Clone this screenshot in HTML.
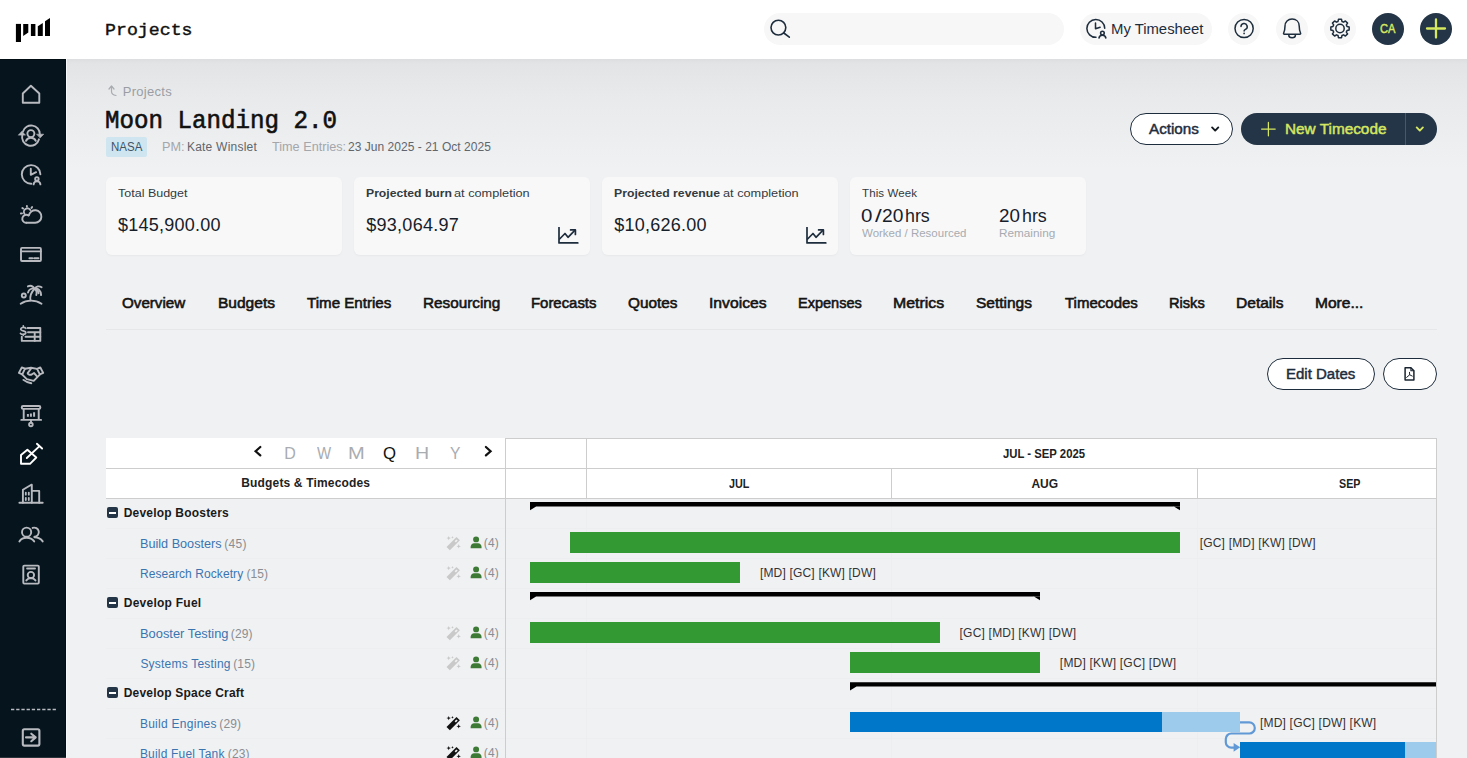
<!DOCTYPE html>
<html><head><meta charset="utf-8">
<style>
*{box-sizing:border-box;margin:0;padding:0}
html,body{width:1467px;height:758px;overflow:hidden}
body{font-family:"Liberation Sans",sans-serif;background:#f0f1f3;color:#1b2733;position:relative}
.abs{position:absolute}
#hdr{position:absolute;left:0;top:0;width:1467px;height:59px;background:#fff;z-index:5}
#side{position:absolute;left:0;top:59px;width:66px;height:699px;background:#06151d;z-index:4;border-top:1px solid #030d14;border-right:1px solid #030d14}
#main{position:absolute;left:66px;top:59px;width:1401px;height:699px;background:linear-gradient(180deg,#dcdee0 0px,#e2e4e6 5px,#e9eaec 40px,#f0f1f3 110px,#f0f1f3 100%)}
.mono{font-family:"Liberation Mono",monospace}
.t{position:absolute;white-space:nowrap;line-height:1}
.pill{position:absolute;border-radius:16px;height:32px}
.circ{position:absolute;width:32px;height:32px;border-radius:50%;top:13px;background:#f7f7f7}
.card{position:absolute;top:177px;width:236px;height:78px;background:#f8f8f8;border-radius:6px;box-shadow:0 1px 2px rgba(0,0,0,.04)}
.tab{position:absolute;top:295px;font-size:15px;font-weight:bold;color:#1a1a1a;white-space:nowrap;line-height:1}
</style></head><body>
<div id="main"></div>
<div id="hdr"></div>
<div id="side"></div><div class="abs" style="left:66px;top:59px;width:1px;height:699px;background:#f7f8f9;z-index:4"></div>

<div class="abs" style="z-index:10;left:0;top:0">
<svg class="abs" style="left:0;top:0" width="66" height="59" viewBox="0 0 66 59"><g fill="#000"><path d="M15.900 23.900h5.100v18.100h-5.100z"/><path d="M23.200 23.900h5.100v8.600l-5.100 3.500z"/><path d="M30.900 23.900h4.500v12.100h-4.500z"/><path d="M37.800 26.200l5-3.200v13h-5z"/><path d="M45 21.300l5-3.200v17.900h-5z"/></g></svg>
<div class="pill" style="left:764px;top:13px;width:300px;background:#f7f7f7"></div>
<svg class="abs" style="left:766px;top:15px" width="26" height="26" viewBox="0 0 26 26" fill="none" stroke="#1e2d3d" stroke-width="1.600" stroke-linecap="round"><circle cx="12.400" cy="12.600" r="7.400"/><path d="M17.800 18l5.500 4.200"/></svg>
<div class="pill" style="left:1080px;top:13px;width:132px;background:#f7f7f7"></div>
<svg class="abs" style="left:1076px;top:8px" width="48" height="48" viewBox="-0.521 -0.833 50 50" fill="none" stroke="#1e2d3d" stroke-width="1.600" stroke-linecap="round" stroke-linejoin="round"><path d="M20.300 29.700A9.300 9.300 0 1 1 29.400 20.300"/><path d="M19.800 14.800v6l4.800-1.600"/><circle cx="27" cy="25.300" r="1.900"/><path d="M23.400 30.400a3.700 3.700 0 0 1 7.200 0"/></svg>
<div class="circ" style="left:1228px"></div>
<svg class="abs" style="left:1224px;top:8px" width="40" height="41" viewBox="0 -0.5 40 41" fill="none" stroke="#1e2d3d" stroke-width="1.500" stroke-linecap="round" stroke-linejoin="round"><circle cx="20.100" cy="20" r="9.100"/><path d="M17 18.100a3.100 3.100 0 1 1 4.500 2.800c-.9.500-1.400.9-1.400 1.700"/><circle cx="20.100" cy="24.900" r=".85" fill="#1e2d3d" stroke="none"/></svg>
<div class="circ" style="left:1276px"></div>
<svg class="abs" style="left:1272px;top:8px" width="40" height="41" viewBox="0 -0.5 40 41" fill="none" stroke="#1e2d3d" stroke-width="1.500" stroke-linecap="round" stroke-linejoin="round"><path d="M12.300 25.700c-.6 0-.9-.5-.7-1 .9-2 1.400-4 1.400-7.200 0-4.200 3-7 7.100-7s7.100 2.800 7.100 7c0 3.200.5 5.200 1.400 7.200.2.500-.1 1-.7 1z"/><path d="M16.800 26.700a3.300 2.500 0 0 0 6.600 0"/></svg>
<div class="circ" style="left:1324px"></div>
<svg class="abs" style="left:1320px;top:8px" width="40" height="41" viewBox="0 -0.5 40 41" fill="none" stroke="#1e2d3d" stroke-width="1.500" stroke-linecap="round" stroke-linejoin="round"><path d="M18.05 12.97 L18.47 10.83 L21.53 10.83 L21.95 12.97 L23.59 13.65 L25.40 12.43 L27.57 14.60 L26.35 16.41 L27.03 18.05 L29.17 18.47 L29.17 21.53 L27.03 21.95 L26.35 23.59 L27.57 25.40 L25.40 27.57 L23.59 26.35 L21.95 27.03 L21.53 29.17 L18.47 29.17 L18.05 27.03 L16.41 26.35 L14.60 27.57 L12.43 25.40 L13.65 23.59 L12.97 21.95 L10.83 21.53 L10.83 18.47 L12.97 18.05 L13.65 16.41 L12.43 14.60 L14.60 12.43 L16.41 13.65z"/><circle cx="20" cy="20" r="4.200"/></svg>
<div class="circ" style="left:1372px;background:#233546"></div>
<div class="circ" style="left:1420px;background:#233546"></div>
<svg class="abs" style="left:1416px;top:8px" width="40" height="41" viewBox="0 -0.5 40 41" fill="none" stroke="#d5e85f" stroke-width="2.300" stroke-linecap="round"><path d="M20 11v18M11 20h18"/></svg>
</div>

<div class="abs" style="z-index:10;left:0;top:0">
<svg class="abs" style="left:11px;top:74px" width="40" height="40" viewBox="0 0 40 40" fill="none" stroke="#b8bac0" stroke-width="1.900" stroke-linecap="round" stroke-linejoin="round"><path d="M19.900 11.800L28.300 19.500V28.800H11.800V19.500z"/></svg>
<svg class="abs" style="left:11px;top:114px" width="40" height="40" viewBox="0 0 40 40" fill="none" stroke="#b8bac0" stroke-width="1.900" stroke-linecap="round" stroke-linejoin="round"><path d="M12 17.500A8.600 8.600 0 0 1 28.800 20"/><path d="M28 25.300A8.600 8.600 0 0 1 11.300 21"/><path d="M25.900 20.200h6.800l-3.400 3.600z" fill="#b8bac0" stroke-width="0.600"/><path d="M7.500 20.900l3.400-3.600 3.400 3.600z" fill="#b8bac0" stroke-width="0.600"/><circle cx="19.900" cy="19.600" r="3.500"/><path d="M15 26.800c.9-2.100 2.800-3.100 4.900-3.100s4 1 4.900 3.100"/></svg>
<svg class="abs" style="left:11px;top:154px" width="40" height="40" viewBox="0 0 40 40" fill="none" stroke="#b8bac0" stroke-width="1.900" stroke-linecap="round" stroke-linejoin="round"><path d="M20.300 29.700A9.300 9.300 0 1 1 29.400 20.300"/><path d="M19.800 14.800v6l5.300-2.600"/><circle cx="25.900" cy="24.900" r="1.750"/><path d="M22.600 30.400a3.400 3.100 0 0 1 6.800 0"/></svg>
<svg class="abs" style="left:11px;top:194px" width="40" height="40" viewBox="0 0 40 40" fill="none" stroke="#b8bac0" stroke-width="1.900" stroke-linecap="round" stroke-linejoin="round"><path d="M15.300 28.800H24.200A6.300 6.300 0 1 0 17.900 21.300"/><path d="M17.400 21.400A4 4 0 1 0 15.300 28.800"/><path d="M13.500 19.900A3.100 3.100 0 0 1 19.300 16"/><path d="M15.900 11.900v.9M21.100 13.100l-.6.800M11.300 14l.8.600M9.900 19.500l1.100-.1"/></svg>
<svg class="abs" style="left:11px;top:234px" width="40" height="40" viewBox="0 0 40 40" fill="none" stroke="#b8bac0" stroke-width="1.900" stroke-linecap="round" stroke-linejoin="round"><rect x="10" y="13.900" width="19.900" height="13.100" rx="1"/><path d="M10 17.400h19.900"/><path d="M18.400 24.300h3M23.200 24.300h4.300"/></svg>
<svg class="abs" style="left:11px;top:274px" width="40" height="40" viewBox="0 0 40 40" fill="none" stroke="#b8bac0" stroke-width="1.900" stroke-linecap="round" stroke-linejoin="round"><path d="M9.700 29.800c6-4.200 14.600-4.200 20.800 0"/><path d="M19.500 26.400c-.8-4 .6-8 3.900-11.400"/><path d="M23.600 14.900c-1.700-3-4.400-3.600-6.700-2.500"/><path d="M23.600 14.900c-3.300-.9-5.800.8-6.600 3.600"/><path d="M23.600 14.900c1.600-2.800 4.600-3.200 7-1.700"/><path d="M23.600 14.900c3.600-.8 6.300 1.600 6.500 6.200"/><path d="M23.600 14.900c2 1.200 2.400 3.600 1.700 6.200"/><path d="M24.500 15.300c2 .6 3 2.200 3 4"/><circle cx="12.800" cy="21.500" r="2"/></svg>
<svg class="abs" style="left:11px;top:314px" width="40" height="40" viewBox="0 0 40 40" fill="none" stroke="#b8bac0" stroke-width="1.900" stroke-linecap="round" stroke-linejoin="round"><path d="M16.600 14H29.300V26.900H10.800V22.700"/><path d="M17 18.200h12.300M14.500 22.700h14.800M23.700 18.200v8.700"/><path d="M14.800 14.400c-.8-1.300-4.900-1.400-5 .7-.1 2.400 5.100 1.100 5 3.600-.1 2.100-4.300 2-5.300.7M12.300 11.900v1.400M12.300 20v1.300" stroke-width="1.700"/></svg>
<svg class="abs" style="left:11px;top:354px" width="40" height="40" viewBox="0 0 40 40" fill="none" stroke="#b8bac0" stroke-width="1.900" stroke-linecap="round" stroke-linejoin="round"><path d="M10.800 13.500l3.200 1.100-2.700 5.800-3.400-1.500z"/><path d="M29.300 13.500l-3.200 1.300 2.700 5.600 3.400-1.500z"/><path d="M14 14.700l6-1 6.100 1.200"/><path d="M20.300 14.300l-3.600 4.800c-.4.600 1.700 2.300 4 1.400l2.300-1.500 3 3.300"/><path d="M11.300 20.600l4.500 4.600 6.900 1.700 6.100-6.300"/><path d="M12.400 25.900c2 1.700 4.700 2.700 7.900 3.400"/></svg>
<svg class="abs" style="left:11px;top:394px" width="40" height="40" viewBox="0 0 40 40" fill="none" stroke="#b8bac0" stroke-width="1.900" stroke-linecap="round" stroke-linejoin="round"><rect x="10.700" y="12" width="18.700" height="2.900" rx="1.400"/><path d="M12.700 15v10.900M27.700 15v10.900M10.300 25.900h19.800M20 25.900v2.700"/><circle cx="19.900" cy="30.500" r="1.800"/><path d="M16.900 20v2.700M19.900 19.400v3.300M23.100 18.300v4.400" stroke-width="2" stroke-linecap="butt"/></svg>
<svg class="abs" style="left:11px;top:434px" width="40" height="40" viewBox="0 0 40 40" fill="none" stroke="#ffffff" stroke-width="1.900" stroke-linecap="round" stroke-linejoin="round"><path d="M25.900 9.800l5.200 4.700M28.500 12.100L15.800 24"/><path d="M16.400 15.800l8.900 7.700-6.300 6.300H10V21.100z"/></svg>
<svg class="abs" style="left:11px;top:474px" width="40" height="40" viewBox="0 0 40 40" fill="none" stroke="#b8bac0" stroke-width="1.900" stroke-linecap="round" stroke-linejoin="round"><path d="M8.400 28.800h23.300"/><path d="M11.900 28.800V15.800L20.300 10.800h.5V28.800"/><path d="M20.800 16.900h7.400V28.800"/><path d="M14.800 18.600v2.100M17.800 18.600v2.100M14.800 23.800v2.200M17.800 23.800v2.200" stroke-width="1.800"/></svg>
<svg class="abs" style="left:11px;top:514px" width="40" height="40" viewBox="0 0 40 40" fill="none" stroke="#b8bac0" stroke-width="1.900" stroke-linecap="round" stroke-linejoin="round"><circle cx="15.600" cy="18.200" r="4.600"/><path d="M8.400 27.400c1.500-2.400 4-3.600 7.200-3.600s5.800 1.200 7.600 3.600"/><path d="M21.600 13.900a4.600 4.600 0 1 1 1.900 8.900"/><path d="M23.500 23.300c3.500 0 6.200 1.300 8.200 4.100"/></svg>
<svg class="abs" style="left:11px;top:554px" width="40" height="40" viewBox="0 0 40 40" fill="none" stroke="#b8bac0" stroke-width="1.900" stroke-linecap="round" stroke-linejoin="round"><rect x="12.300" y="11.600" width="15.500" height="18" rx="1"/><path d="M16.100 14.500h7.900"/><circle cx="19.900" cy="21.100" r="3.200"/><path d="M15.300 26.400c1.200-1.600 2.600-2.400 4.600-2.400s3.400.8 4.600 2.400"/></svg>
<svg class="abs" style="left:11px;top:708px" width="45" height="3"><path d="M0 1.500h45" stroke="#b8bac0" stroke-width="1.400" stroke-dasharray="3.300 1.900"/></svg>
<svg class="abs" style="left:11px;top:718px" width="40" height="40" viewBox="0 0 40 40" fill="none" stroke="#b8bac0" stroke-width="2.100" stroke-linecap="round" stroke-linejoin="round"><rect x="11.800" y="11.200" width="16.600" height="16.400" rx="1.500"/><path d="M15 19.400h9.400M20.300 15.700l4.400 3.700-4.400 3.800"/></svg>
<div class="abs" style="left:0;top:757px;width:66px;height:1px;background:#2b343b"></div>
</div>


<div class="abs" style="z-index:3;left:0;top:0">
<svg class="abs" style="left:107px;top:84px" width="12" height="13" viewBox="0 0 12 13" fill="none" stroke="#a9acb0" stroke-width="1.200" stroke-linecap="round" stroke-linejoin="round"><path d="M2 5l2.500-3 2.500 3"/><path d="M4.500 2.500v5c0 2 1.500 3.500 4.500 4"/></svg>
<div class="abs" style="left:106px;top:137px;width:41px;height:20px;background:#cfe6f0;border-radius:2px"></div>

<div class="pill" style="left:1130px;top:113px;width:103px;background:#fff;border:1px solid #1e2d3d"></div>
<svg class="abs" style="left:1209px;top:124px" width="12" height="12" viewBox="0 0 12 12" fill="none" stroke="#141a20" stroke-width="1.900" stroke-linecap="round" stroke-linejoin="round"><path d="M3.100 3.400l3.100 3.200 3.100-3.200"/></svg>
<div class="pill" style="left:1241px;top:113px;width:196px;background:#233546"></div>
<div class="abs" style="left:1405px;top:113px;width:1px;height:32px;background:#4a5866"></div>
<svg class="abs" style="left:1260px;top:121px" width="17" height="16" viewBox="0 0 17 16" fill="none" stroke="#d5e662" stroke-width="1.250" stroke-linecap="round"><path d="M8.400 1.400v13.400M1.600 8.100h13.600"/></svg>
<svg class="abs" style="left:1414px;top:124px" width="12" height="12" viewBox="0 0 12 12" fill="none" stroke="#d5e662" stroke-width="1.900" stroke-linecap="round" stroke-linejoin="round"><path d="M2.700 3.400l3.100 3.200 3.100-3.200"/></svg>
</div>


<div class="abs" style="z-index:3;left:0;top:0">
<div class="card" style="left:106px"></div>
<div class="card" style="left:354px"></div>
<div class="card" style="left:602px"></div>
<div class="card" style="left:850px"></div>
<svg class="abs" style="left:558px;top:227px" width="22" height="18" viewBox="0 0 22 18" fill="none" stroke="#1e2d3d" stroke-width="1.700" stroke-linecap="round" stroke-linejoin="round"><path d="M1 .4V15.900H19.800"/><path d="M1.600 12L7 6.500l3 3.800 6.800-6.900"/><path d="M12.600 2.900h4.800v4.500"/></svg>
<svg class="abs" style="left:806px;top:227px" width="22" height="18" viewBox="0 0 22 18" fill="none" stroke="#1e2d3d" stroke-width="1.700" stroke-linecap="round" stroke-linejoin="round"><path d="M1 .4V15.900H19.800"/><path d="M1.600 12L7 6.500l3 3.800 6.800-6.900"/><path d="M12.600 2.900h4.800v4.500"/></svg>
</div>

<div class="abs" style="z-index:3;left:0;top:0">
<div class="abs" style="left:106px;top:329px;width:1331px;height:1px;background:#e6e7e9"></div>
<div class="pill" style="left:1267px;top:358px;width:108px;background:#fff;border:1px solid #1e2d3d"></div>
<div class="pill" style="left:1383px;top:358px;width:54px;background:#fff;border:1px solid #1e2d3d"></div>
<svg class="abs" style="left:1403px;top:366px" width="14" height="16" viewBox="0 0 14 16" fill="none" stroke="#1a2430" stroke-width="1.500" stroke-linejoin="round" stroke-linecap="round"><path d="M2.100 1.700h5.800l3 3v9.300h-8.800z"/><path d="M7.900 1.900v2.800h2.800" stroke-width="1.100"/><path d="M6.500 6.300l.2 2.500-3.100 2.600M6.700 8.800l2.600 1.300" stroke-width="1"/></svg>
</div>

<div class="abs" style="z-index:3;left:0;top:0">
<div class="abs" style="left:106px;top:438px;width:1331px;height:61px;background:#fff"></div>
<div class="abs" style="left:505px;top:438px;width:932px;height:1px;background:#cdcdcd"></div>
<div class="abs" style="left:106px;top:468px;width:1331px;height:1px;background:#cdcdcd"></div>
<div class="abs" style="left:106px;top:498px;width:1331px;height:1px;background:#cdcdcd"></div>
<div class="abs" style="left:505px;top:438px;width:1px;height:320px;background:#cdcdcd"></div>
<div class="abs" style="left:1436px;top:438px;width:1px;height:320px;background:#cdcdcd"></div>
<div class="abs" style="left:586px;top:438px;width:1px;height:60px;background:#cdcdcd"></div>
<div class="abs" style="left:891px;top:468px;width:1px;height:30px;background:#cdcdcd"></div>
<div class="abs" style="left:1197px;top:468px;width:1px;height:30px;background:#cdcdcd"></div>
<div class="abs" style="left:586px;top:499px;width:1px;height:259px;background:#edeef0"></div>
<div class="abs" style="left:891px;top:499px;width:1px;height:259px;background:#edeef0"></div>
<div class="abs" style="left:1197px;top:499px;width:1px;height:259px;background:#edeef0"></div>
<div class="abs" style="left:106px;top:528px;width:399px;height:1px;background:#edeef0"></div><div class="abs" style="left:506px;top:528px;width:930px;height:1px;background:#edeef0"></div>
<div class="abs" style="left:106px;top:558px;width:399px;height:1px;background:#edeef0"></div><div class="abs" style="left:506px;top:558px;width:930px;height:1px;background:#edeef0"></div>
<div class="abs" style="left:106px;top:588px;width:399px;height:1px;background:#edeef0"></div><div class="abs" style="left:506px;top:588px;width:930px;height:1px;background:#edeef0"></div>
<div class="abs" style="left:106px;top:618px;width:399px;height:1px;background:#edeef0"></div><div class="abs" style="left:506px;top:618px;width:930px;height:1px;background:#edeef0"></div>
<div class="abs" style="left:106px;top:648px;width:399px;height:1px;background:#edeef0"></div><div class="abs" style="left:506px;top:648px;width:930px;height:1px;background:#edeef0"></div>
<div class="abs" style="left:106px;top:678px;width:399px;height:1px;background:#edeef0"></div><div class="abs" style="left:506px;top:678px;width:930px;height:1px;background:#edeef0"></div>
<div class="abs" style="left:106px;top:708px;width:399px;height:1px;background:#edeef0"></div><div class="abs" style="left:506px;top:708px;width:930px;height:1px;background:#edeef0"></div>
<div class="abs" style="left:106px;top:738px;width:399px;height:1px;background:#edeef0"></div><div class="abs" style="left:506px;top:738px;width:930px;height:1px;background:#edeef0"></div>
<svg class="abs" style="left:252px;top:445px" width="12" height="12" viewBox="0 0 12 12" fill="none" stroke="#111" stroke-width="2.200" stroke-linecap="round" stroke-linejoin="miter"><path d="M8.300 2L3.600 6.200l4.700 4.200"/></svg><svg class="abs" style="left:482px;top:445px" width="12" height="12" viewBox="0 0 12 12" fill="none" stroke="#111" stroke-width="2.200" stroke-linecap="round" stroke-linejoin="miter"><path d="M3.900 2L8.600 6.200l-4.700 4.200"/></svg>
<div class="abs" style="left:107px;top:507px;width:11px;height:11px;background:#233546;border-radius:2px"></div><div class="abs" style="left:109px;top:512px;width:7px;height:1.700px;background:#fff"></div>
<svg class="abs" style="left:446px;top:535px" width="17" height="17" viewBox="0 0 17 17"><g transform="translate(-0.3,0.9)"><g fill="#c9c9c9"><path d="M10.800 1.200l3.400 3.200L4.200 14.300 0.800 11.100z"/><path d="M3 0l.6 1.600L5.200 2.200 3.600 2.800 3 4.400 2.400 2.800.8 2.200l1.600-.6z"/><path d="M6.800 0l.4 1 1 .4-1 .4-.4 1-.4-1-1-.4 1-.4z"/><path d="M13 8.200l.6 1.600 1.600.6-1.600.6-.6 1.600-.6-1.600-1.600-.6 1.600-.6z"/></g><path d="M10.700 3.500l1.300 1.200-1.800 1.800-1.300-1.200z" fill="#f0f1f3"/></g></svg><svg class="abs" style="left:470px;top:536px" width="14" height="14" viewBox="0 0 14 14" fill="#3c7a36"><g transform="translate(0.15,0.27) scale(0.99,0.955)"><circle cx="6" cy="3.300" r="3"/><path d="M0.500 12.500v-1.500c0-2.300 1.700-3.800 3.500-3.800h4c1.800 0 3.500 1.500 3.500 3.800v1.500z"/></g></svg><svg class="abs" style="left:446px;top:565px" width="17" height="17" viewBox="0 0 17 17"><g transform="translate(-0.3,0.9)"><g fill="#c9c9c9"><path d="M10.800 1.200l3.400 3.200L4.200 14.300 0.800 11.100z"/><path d="M3 0l.6 1.600L5.200 2.200 3.600 2.800 3 4.400 2.400 2.800.8 2.200l1.600-.6z"/><path d="M6.800 0l.4 1 1 .4-1 .4-.4 1-.4-1-1-.4 1-.4z"/><path d="M13 8.200l.6 1.600 1.600.6-1.600.6-.6 1.600-.6-1.600-1.600-.6 1.600-.6z"/></g><path d="M10.700 3.500l1.300 1.200-1.800 1.800-1.300-1.200z" fill="#f0f1f3"/></g></svg><svg class="abs" style="left:470px;top:566px" width="14" height="14" viewBox="0 0 14 14" fill="#3c7a36"><g transform="translate(0.15,0.27) scale(0.99,0.955)"><circle cx="6" cy="3.300" r="3"/><path d="M0.500 12.500v-1.500c0-2.300 1.700-3.800 3.500-3.800h4c1.800 0 3.500 1.500 3.500 3.800v1.500z"/></g></svg><div class="abs" style="left:107px;top:597px;width:11px;height:11px;background:#233546;border-radius:2px"></div><div class="abs" style="left:109px;top:602px;width:7px;height:1.700px;background:#fff"></div>
<svg class="abs" style="left:446px;top:625px" width="17" height="17" viewBox="0 0 17 17"><g transform="translate(-0.3,0.9)"><g fill="#c9c9c9"><path d="M10.800 1.200l3.400 3.200L4.200 14.300 0.800 11.100z"/><path d="M3 0l.6 1.600L5.200 2.200 3.600 2.800 3 4.400 2.400 2.800.8 2.200l1.600-.6z"/><path d="M6.800 0l.4 1 1 .4-1 .4-.4 1-.4-1-1-.4 1-.4z"/><path d="M13 8.200l.6 1.600 1.600.6-1.600.6-.6 1.600-.6-1.600-1.600-.6 1.600-.6z"/></g><path d="M10.700 3.500l1.300 1.200-1.800 1.800-1.300-1.200z" fill="#f0f1f3"/></g></svg><svg class="abs" style="left:470px;top:626px" width="14" height="14" viewBox="0 0 14 14" fill="#3c7a36"><g transform="translate(0.15,0.27) scale(0.99,0.955)"><circle cx="6" cy="3.300" r="3"/><path d="M0.500 12.500v-1.500c0-2.300 1.700-3.800 3.500-3.800h4c1.800 0 3.500 1.500 3.500 3.800v1.500z"/></g></svg><svg class="abs" style="left:446px;top:655px" width="17" height="17" viewBox="0 0 17 17"><g transform="translate(-0.3,0.9)"><g fill="#c9c9c9"><path d="M10.800 1.200l3.400 3.200L4.200 14.300 0.800 11.100z"/><path d="M3 0l.6 1.600L5.200 2.200 3.600 2.800 3 4.400 2.400 2.800.8 2.200l1.600-.6z"/><path d="M6.800 0l.4 1 1 .4-1 .4-.4 1-.4-1-1-.4 1-.4z"/><path d="M13 8.200l.6 1.600 1.600.6-1.600.6-.6 1.600-.6-1.600-1.600-.6 1.600-.6z"/></g><path d="M10.700 3.500l1.300 1.200-1.800 1.800-1.300-1.200z" fill="#f0f1f3"/></g></svg><svg class="abs" style="left:470px;top:656px" width="14" height="14" viewBox="0 0 14 14" fill="#3c7a36"><g transform="translate(0.15,0.27) scale(0.99,0.955)"><circle cx="6" cy="3.300" r="3"/><path d="M0.500 12.500v-1.500c0-2.300 1.700-3.800 3.500-3.800h4c1.800 0 3.500 1.500 3.500 3.800v1.500z"/></g></svg><div class="abs" style="left:107px;top:687px;width:11px;height:11px;background:#233546;border-radius:2px"></div><div class="abs" style="left:109px;top:692px;width:7px;height:1.700px;background:#fff"></div>
<svg class="abs" style="left:446px;top:715px" width="17" height="17" viewBox="0 0 17 17"><g transform="translate(-0.3,0.9)"><g fill="#111"><path d="M10.800 1.200l3.400 3.200L4.200 14.300 0.800 11.100z"/><path d="M3 0l.6 1.600L5.200 2.200 3.600 2.800 3 4.400 2.400 2.800.8 2.200l1.600-.6z"/><path d="M6.800 0l.4 1 1 .4-1 .4-.4 1-.4-1-1-.4 1-.4z"/><path d="M13 8.200l.6 1.600 1.600.6-1.600.6-.6 1.600-.6-1.600-1.600-.6 1.600-.6z"/></g><path d="M10.700 3.500l1.300 1.200-1.800 1.800-1.300-1.200z" fill="#f0f1f3"/></g></svg><svg class="abs" style="left:470px;top:716px" width="14" height="14" viewBox="0 0 14 14" fill="#3c7a36"><g transform="translate(0.15,0.27) scale(0.99,0.955)"><circle cx="6" cy="3.300" r="3"/><path d="M0.500 12.500v-1.500c0-2.300 1.700-3.800 3.500-3.800h4c1.800 0 3.500 1.500 3.500 3.800v1.500z"/></g></svg><svg class="abs" style="left:446px;top:745px" width="17" height="17" viewBox="0 0 17 17"><g transform="translate(-0.3,0.9)"><g fill="#111"><path d="M10.800 1.200l3.400 3.200L4.200 14.300 0.800 11.100z"/><path d="M3 0l.6 1.600L5.200 2.200 3.600 2.800 3 4.400 2.400 2.800.8 2.200l1.600-.6z"/><path d="M6.800 0l.4 1 1 .4-1 .4-.4 1-.4-1-1-.4 1-.4z"/><path d="M13 8.200l.6 1.600 1.600.6-1.600.6-.6 1.600-.6-1.600-1.600-.6 1.600-.6z"/></g><path d="M10.700 3.500l1.300 1.200-1.800 1.800-1.300-1.200z" fill="#f0f1f3"/></g></svg><svg class="abs" style="left:470px;top:746px" width="14" height="14" viewBox="0 0 14 14" fill="#3c7a36"><g transform="translate(0.15,0.27) scale(0.99,0.955)"><circle cx="6" cy="3.300" r="3"/><path d="M0.500 12.500v-1.500c0-2.300 1.700-3.800 3.500-3.800h4c1.800 0 3.500 1.500 3.500 3.800v1.500z"/></g></svg>
<svg class="abs" style="left:530px;top:502px" width="650" height="9" viewBox="0 0 650 9"><path d="M0 0H650V4.400H0z M0 4.300h6.500L0 8.300z M650 4.300h-6.500L650 8.300z" fill="#000"/></svg>
<svg class="abs" style="left:530px;top:592px" width="510" height="9" viewBox="0 0 510 9"><path d="M0 0H510V4.400H0z M0 4.300h6.500L0 8.300z M510 4.300h-6.500L510 8.300z" fill="#000"/></svg>
<svg class="abs" style="left:850px;top:682px" width="586" height="10" viewBox="0 -0.2 586 10"><path d="M0 0H586V4.400H0z M0 4.300h6.500L0 8.300z" fill="#000"/></svg>
<div class="abs" style="left:570px;top:532px;width:610px;height:20.600px;background:#339933"></div>
<div class="abs" style="left:530px;top:562px;width:210px;height:20.600px;background:#339933"></div>

<div class="abs" style="left:530px;top:622px;width:410px;height:20.600px;background:#339933"></div>
<div class="abs" style="left:850px;top:652px;width:190px;height:20.600px;background:#339933"></div>

<div class="abs" style="left:850px;top:712px;width:311.800px;height:20.400px;background:#0077c8"></div>
<div class="abs" style="left:1161.800px;top:712px;width:78.200px;height:20.400px;background:#9ccbec"></div>
<div class="abs" style="left:1240px;top:742.200px;width:164.600px;height:20.400px;background:#0077c8"></div>
<div class="abs" style="left:1404.600px;top:742.200px;width:31.400px;height:20.400px;background:#9ccbec"></div>
<svg class="abs" style="left:1215px;top:712px" width="50" height="46" viewBox="1215 712 50 46" fill="none" stroke="#6199d6" stroke-width="2.200"><path d="M1240 722.400H1249.300a5.500 5.500 0 0 1 5.500 5.500v.1a5.500 5.500 0 0 1-5.500 5.500H1231.300a5.500 5.500 0 0 0-5.500 5.500v3.200a5.500 5.500 0 0 0 5.500 5.500H1235"/><path d="M1233.600 742.900l6.600 4.400-6.600 4.500z" fill="#6199d6" stroke="none"/></svg>
</div>

<div class="abs" style="z-index:20;left:0;top:0">
<div class="t" style="left:104.96px;top:22px;font-size:17px;color:#111;font-family:'Liberation Mono',monospace;transform:scaleX(1.0726);transform-origin:0 0;-webkit-text-stroke:0.4px #111">Projects</div>
<div class="t" style="left:1111.47px;top:22px;font-size:14px;color:#1e2d3d;font-family:'Liberation Sans',sans-serif;transform:scaleX(1.0612);transform-origin:0 0">My Timesheet</div>
<div class="t" style="left:1380.46px;top:23px;font-size:12.5px;color:#d5e662;font-family:'Liberation Sans',sans-serif;transform:scaleX(0.8882);transform-origin:0 0;-webkit-text-stroke:0.45px #d5e662">CA</div>
<div class="t" style="left:122.70px;top:85px;font-size:13px;color:#9a9ea4;font-family:'Liberation Sans',sans-serif;letter-spacing:0.286px">Projects</div>
<div class="t" style="left:105.19px;top:109px;font-size:25px;color:#111;font-family:'Liberation Mono',monospace;transform:scaleX(0.9667);transform-origin:0 0;-webkit-text-stroke:0.6px #111">Moon Landing 2.0</div>
<div class="t" style="left:110.74px;top:141px;font-size:12px;color:#3d5468;font-family:'Liberation Sans',sans-serif;transform:scaleX(0.9575);transform-origin:0 0">NASA</div>
<div class="t" style="left:161.55px;top:141px;font-size:12px;color:#a3a6aa;font-family:'Liberation Sans',sans-serif;transform:scaleX(1.0545);transform-origin:0 0">PM:</div>
<div class="t" style="left:186.90px;top:141px;font-size:12px;color:#60666c;font-family:'Liberation Sans',sans-serif;letter-spacing:0.232px">Kate Winslet</div>
<div class="t" style="left:272.14px;top:141px;font-size:12px;color:#a3a6aa;font-family:'Liberation Sans',sans-serif;transform:scaleX(1.0551);transform-origin:0 0">Time Entries:</div>
<div class="t" style="left:348.00px;top:141px;font-size:12px;color:#60666c;font-family:'Liberation Sans',sans-serif;letter-spacing:0.031px">23 Jun 2025 - 21 Oct 2025</div>
<div class="t" style="left:1149.47px;top:122px;font-size:14px;color:#1e2d3d;font-family:'Liberation Sans',sans-serif;transform:scaleX(1.0870);transform-origin:0 0;-webkit-text-stroke:0.45px #1e2d3d">Actions</div>
<div class="t" style="left:1284.90px;top:122px;font-size:14px;color:#d5e662;font-family:'Liberation Sans',sans-serif;transform:scaleX(1.0959);transform-origin:0 0;-webkit-text-stroke:0.45px #d5e662">New Timecode</div>
<div class="t" style="left:117.73px;top:188px;font-size:11.5px;color:#333a40;font-family:'Liberation Sans',sans-serif;transform:scaleX(1.0871);transform-origin:0 0">Total Budget</div>
<div class="t" style="left:118.05px;top:216px;font-size:18px;color:#16202a;font-family:'Liberation Sans',sans-serif;letter-spacing:0.245px">$145,900.00</div>
<div class="t" style="left:365.71px;top:188px;font-size:11.5px;color:#333a40;font-family:'Liberation Sans',sans-serif;transform:scaleX(1.0596);transform-origin:0 0;font-weight:700">Projected burn</div>
<div class="t" style="left:454.45px;top:188px;font-size:11.5px;color:#333a40;font-family:'Liberation Sans',sans-serif;transform:scaleX(1.1063);transform-origin:0 0">at completion</div>
<div class="t" style="left:366.25px;top:216px;font-size:18px;color:#16202a;font-family:'Liberation Sans',sans-serif;letter-spacing:0.267px">$93,064.97</div>
<div class="t" style="left:613.50px;top:188px;font-size:11.5px;color:#333a40;font-family:'Liberation Sans',sans-serif;transform:scaleX(1.0629);transform-origin:0 0;font-weight:700">Projected revenue</div>
<div class="t" style="left:722.65px;top:188px;font-size:11.5px;color:#333a40;font-family:'Liberation Sans',sans-serif;transform:scaleX(1.1063);transform-origin:0 0">at completion</div>
<div class="t" style="left:614.25px;top:216px;font-size:18px;color:#16202a;font-family:'Liberation Sans',sans-serif;letter-spacing:0.228px">$10,626.00</div>
<div class="t" style="left:862.05px;top:188px;font-size:11.5px;color:#333a40;font-family:'Liberation Sans',sans-serif;letter-spacing:0.094px">This Week</div>
<div class="t" style="left:861.37px;top:207px;font-size:18.5px;color:#16202a;font-family:'Liberation Sans',sans-serif;transform:scaleX(1.1086);transform-origin:0 0">0</div>
<div class="t" style="left:875.00px;top:207px;font-size:18.5px;color:#16202a;font-family:'Liberation Sans',sans-serif;transform:scaleX(1.3000);transform-origin:0 0">/</div>
<div class="t" style="left:882.26px;top:207px;font-size:18.5px;color:#16202a;font-family:'Liberation Sans',sans-serif;transform:scaleX(1.0368);transform-origin:0 0">20</div>
<div class="t" style="left:905.29px;top:207px;font-size:18.5px;color:#16202a;font-family:'Liberation Sans',sans-serif;transform:scaleX(0.9642);transform-origin:0 0">hrs</div>
<div class="t" style="left:862.30px;top:228px;font-size:10.5px;color:#a6abb1;font-family:'Liberation Sans',sans-serif;transform:scaleX(1.0937);transform-origin:0 0">Worked / Resourced</div>
<div class="t" style="left:999.28px;top:207px;font-size:18.5px;color:#16202a;font-family:'Liberation Sans',sans-serif;transform:scaleX(1.0158);transform-origin:0 0">20</div>
<div class="t" style="left:1021.99px;top:207px;font-size:18.5px;color:#16202a;font-family:'Liberation Sans',sans-serif;transform:scaleX(0.9642);transform-origin:0 0">hrs</div>
<div class="t" style="left:999.46px;top:228px;font-size:10.5px;color:#a6abb1;font-family:'Liberation Sans',sans-serif;transform:scaleX(1.1200);transform-origin:0 0">Remaining</div>
<div class="t" style="left:122.06px;top:296px;font-size:14px;color:#141414;font-family:'Liberation Sans',sans-serif;transform:scaleX(1.0833);transform-origin:0 0;-webkit-text-stroke:0.55px #141414">Overview</div>
<div class="t" style="left:217.57px;top:296px;font-size:14px;color:#141414;font-family:'Liberation Sans',sans-serif;transform:scaleX(1.1089);transform-origin:0 0;-webkit-text-stroke:0.55px #141414">Budgets</div>
<div class="t" style="left:306.70px;top:296px;font-size:14px;color:#141414;font-family:'Liberation Sans',sans-serif;transform:scaleX(1.0804);transform-origin:0 0;-webkit-text-stroke:0.55px #141414">Time Entries</div>
<div class="t" style="left:422.68px;top:296px;font-size:14px;color:#141414;font-family:'Liberation Sans',sans-serif;transform:scaleX(1.0921);transform-origin:0 0;-webkit-text-stroke:0.55px #141414">Resourcing</div>
<div class="t" style="left:531.00px;top:296px;font-size:14px;color:#141414;font-family:'Liberation Sans',sans-serif;transform:scaleX(1.0645);transform-origin:0 0;-webkit-text-stroke:0.55px #141414">Forecasts</div>
<div class="t" style="left:628.15px;top:296px;font-size:14px;color:#141414;font-family:'Liberation Sans',sans-serif;transform:scaleX(1.0944);transform-origin:0 0;-webkit-text-stroke:0.55px #141414">Quotes</div>
<div class="t" style="left:708.68px;top:296px;font-size:14px;color:#141414;font-family:'Liberation Sans',sans-serif;transform:scaleX(1.1204);transform-origin:0 0;-webkit-text-stroke:0.55px #141414">Invoices</div>
<div class="t" style="left:797.92px;top:296px;font-size:14px;color:#141414;font-family:'Liberation Sans',sans-serif;transform:scaleX(1.0380);transform-origin:0 0;-webkit-text-stroke:0.55px #141414">Expenses</div>
<div class="t" style="left:893.45px;top:296px;font-size:14px;color:#141414;font-family:'Liberation Sans',sans-serif;transform:scaleX(1.1322);transform-origin:0 0;-webkit-text-stroke:0.55px #141414">Metrics</div>
<div class="t" style="left:976.42px;top:296px;font-size:14px;color:#141414;font-family:'Liberation Sans',sans-serif;transform:scaleX(1.1060);transform-origin:0 0;-webkit-text-stroke:0.55px #141414">Settings</div>
<div class="t" style="left:1064.70px;top:296px;font-size:14px;color:#141414;font-family:'Liberation Sans',sans-serif;transform:scaleX(1.0716);transform-origin:0 0;-webkit-text-stroke:0.55px #141414">Timecodes</div>
<div class="t" style="left:1168.82px;top:296px;font-size:14px;color:#141414;font-family:'Liberation Sans',sans-serif;transform:scaleX(1.0436);transform-origin:0 0;-webkit-text-stroke:0.55px #141414">Risks</div>
<div class="t" style="left:1236.17px;top:296px;font-size:14px;color:#141414;font-family:'Liberation Sans',sans-serif;transform:scaleX(1.1114);transform-origin:0 0;-webkit-text-stroke:0.55px #141414">Details</div>
<div class="t" style="left:1315.37px;top:296px;font-size:14px;color:#141414;font-family:'Liberation Sans',sans-serif;transform:scaleX(1.1114);transform-origin:0 0;-webkit-text-stroke:0.55px #141414">More...</div>
<div class="t" style="left:1286.13px;top:367px;font-size:14px;color:#1e2d3d;font-family:'Liberation Sans',sans-serif;transform:scaleX(1.0719);transform-origin:0 0;-webkit-text-stroke:0.45px #1e2d3d">Edit Dates</div>
<div class="t" style="left:284.25px;top:446px;font-size:16px;color:#a9acb0;font-family:'Liberation Sans',sans-serif;transform:scaleX(1.0000);transform-origin:0 0">D</div>
<div class="t" style="left:316.50px;top:446px;font-size:16px;color:#a9acb0;font-family:'Liberation Sans',sans-serif;transform:scaleX(0.9333);transform-origin:0 0">W</div>
<div class="t" style="left:347.93px;top:446px;font-size:16px;color:#a9acb0;font-family:'Liberation Sans',sans-serif;transform:scaleX(1.2558);transform-origin:0 0">M</div>
<div class="t" style="left:382.72px;top:446px;font-size:16px;color:#111;font-family:'Liberation Sans',sans-serif;transform:scaleX(1.0455);transform-origin:0 0">Q</div>
<div class="t" style="left:414.97px;top:446px;font-size:16px;color:#a9acb0;font-family:'Liberation Sans',sans-serif;transform:scaleX(1.2222);transform-origin:0 0">H</div>
<div class="t" style="left:450.01px;top:446px;font-size:16px;color:#a9acb0;font-family:'Liberation Sans',sans-serif;transform:scaleX(0.9744);transform-origin:0 0">Y</div>
<div class="t" style="left:241.25px;top:477px;font-size:12px;color:#222;font-family:'Liberation Sans',sans-serif;letter-spacing:0.161px;font-weight:700">Budgets &amp; Timecodes</div>
<div class="t" style="left:1003.26px;top:448px;font-size:12px;color:#222;font-family:'Liberation Sans',sans-serif;transform:scaleX(0.9438);transform-origin:0 0;font-weight:700">JUL - SEP 2025</div>
<div class="t" style="left:728.77px;top:478px;font-size:12px;color:#222;font-family:'Liberation Sans',sans-serif;transform:scaleX(0.9000);transform-origin:0 0;font-weight:700">JUL</div>
<div class="t" style="left:1031.55px;top:478px;font-size:12px;color:#222;font-family:'Liberation Sans',sans-serif;letter-spacing:-0.125px;font-weight:700">AUG</div>
<div class="t" style="left:1339.05px;top:478px;font-size:12px;color:#222;font-family:'Liberation Sans',sans-serif;transform:scaleX(0.8913);transform-origin:0 0;font-weight:700">SEP</div>
<div class="t" style="left:123.75px;top:507px;font-size:12px;color:#1a1a1a;font-family:'Liberation Sans',sans-serif;letter-spacing:0.197px;font-weight:700">Develop Boosters</div>
<div class="t" style="left:139.85px;top:538px;font-size:12px;color:#3a75b0;font-family:'Liberation Sans',sans-serif;transform:scaleX(1.0539);transform-origin:0 0">Build Boosters</div>
<div class="t" style="left:224.35px;top:538px;font-size:12px;color:#8a8d91;font-family:'Liberation Sans',sans-serif;letter-spacing:0.267px">(45)</div>
<div class="t" style="left:483.85px;top:537px;font-size:12px;color:#8a8d91;font-family:'Liberation Sans',sans-serif;letter-spacing:0.175px">(4)</div>
<div class="t" style="left:139.90px;top:568px;font-size:12px;color:#3a75b0;font-family:'Liberation Sans',sans-serif;letter-spacing:0.075px">Research Rocketry</div>
<div class="t" style="left:246.45px;top:568px;font-size:12px;color:#8a8d91;font-family:'Liberation Sans',sans-serif;letter-spacing:0.033px">(15)</div>
<div class="t" style="left:483.85px;top:567px;font-size:12px;color:#8a8d91;font-family:'Liberation Sans',sans-serif;letter-spacing:0.175px">(4)</div>
<div class="t" style="left:123.75px;top:597px;font-size:12px;color:#1a1a1a;font-family:'Liberation Sans',sans-serif;letter-spacing:0.250px;font-weight:700">Develop Fuel</div>
<div class="t" style="left:139.83px;top:628px;font-size:12px;color:#3a75b0;font-family:'Liberation Sans',sans-serif;transform:scaleX(1.0724);transform-origin:0 0">Booster Testing</div>
<div class="t" style="left:230.85px;top:628px;font-size:12px;color:#8a8d91;font-family:'Liberation Sans',sans-serif;letter-spacing:0.133px">(29)</div>
<div class="t" style="left:483.85px;top:627px;font-size:12px;color:#8a8d91;font-family:'Liberation Sans',sans-serif;letter-spacing:0.175px">(4)</div>
<div class="t" style="left:140.40px;top:658px;font-size:12px;color:#3a75b0;font-family:'Liberation Sans',sans-serif;letter-spacing:0.214px">Systems Testing</div>
<div class="t" style="left:233.15px;top:658px;font-size:12px;color:#8a8d91;font-family:'Liberation Sans',sans-serif;letter-spacing:0.167px">(15)</div>
<div class="t" style="left:483.85px;top:657px;font-size:12px;color:#8a8d91;font-family:'Liberation Sans',sans-serif;letter-spacing:0.175px">(4)</div>
<div class="t" style="left:123.75px;top:687px;font-size:12px;color:#1a1a1a;font-family:'Liberation Sans',sans-serif;letter-spacing:0.197px;font-weight:700">Develop Space Craft</div>
<div class="t" style="left:139.90px;top:718px;font-size:12px;color:#3a75b0;font-family:'Liberation Sans',sans-serif;letter-spacing:0.275px">Build Engines</div>
<div class="t" style="left:219.25px;top:718px;font-size:12px;color:#8a8d91;font-family:'Liberation Sans',sans-serif;letter-spacing:0.133px">(29)</div>
<div class="t" style="left:483.85px;top:717px;font-size:12px;color:#8a8d91;font-family:'Liberation Sans',sans-serif;letter-spacing:0.175px">(4)</div>
<div class="t" style="left:139.90px;top:748px;font-size:12px;color:#3a75b0;font-family:'Liberation Sans',sans-serif;letter-spacing:0.196px">Build Fuel Tank</div>
<div class="t" style="left:227.75px;top:748px;font-size:12px;color:#8a8d91;font-family:'Liberation Sans',sans-serif;letter-spacing:0.133px">(23)</div>
<div class="t" style="left:483.85px;top:747px;font-size:12px;color:#8a8d91;font-family:'Liberation Sans',sans-serif;letter-spacing:0.175px">(4)</div>
<div class="t" style="left:1199.75px;top:537px;font-size:12px;color:#333;font-family:'Liberation Sans',sans-serif;letter-spacing:0.178px">[GC] [MD] [KW] [DW]</div>
<div class="t" style="left:759.95px;top:567px;font-size:12px;color:#333;font-family:'Liberation Sans',sans-serif;letter-spacing:0.178px">[MD] [GC] [KW] [DW]</div>
<div class="t" style="left:959.55px;top:627px;font-size:12px;color:#333;font-family:'Liberation Sans',sans-serif;letter-spacing:0.211px">[GC] [MD] [KW] [DW]</div>
<div class="t" style="left:1059.85px;top:657px;font-size:12px;color:#333;font-family:'Liberation Sans',sans-serif;letter-spacing:0.200px">[MD] [KW] [GC] [DW]</div>
<div class="t" style="left:1259.95px;top:717px;font-size:12px;color:#333;font-family:'Liberation Sans',sans-serif;letter-spacing:0.200px">[MD] [GC] [DW] [KW]</div>
</div>
</body></html>
